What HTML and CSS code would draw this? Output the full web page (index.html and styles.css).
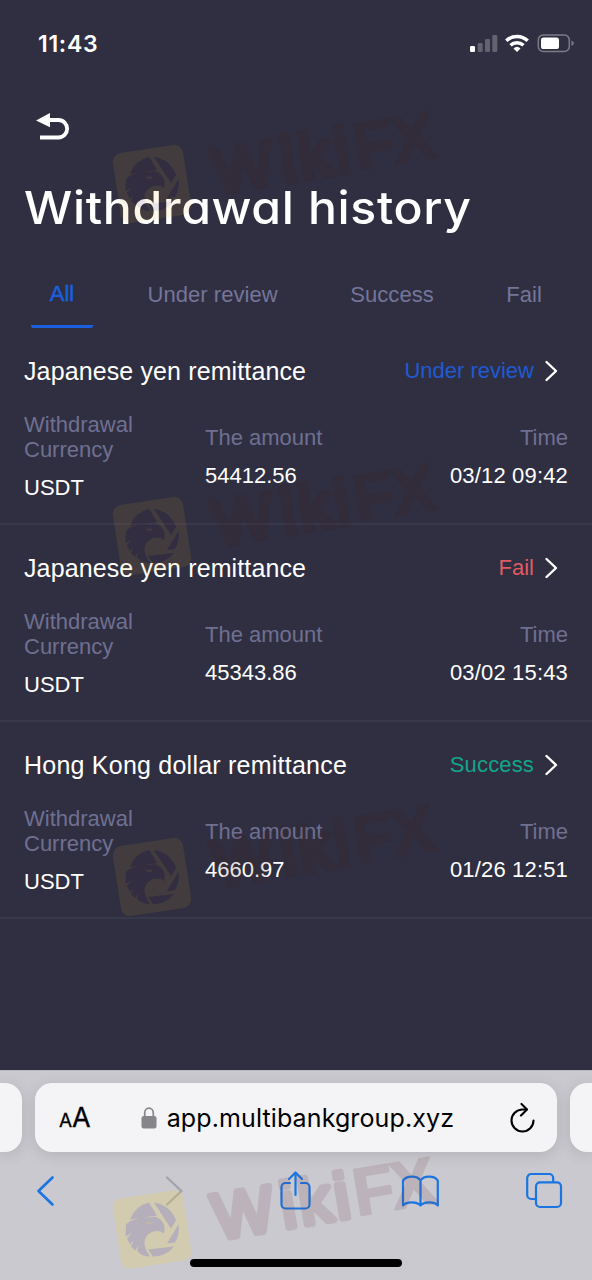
FILE: index.html
```html
<!DOCTYPE html>
<html lang="en">
<head>
<meta charset="utf-8">
<title>Withdrawal history</title>
<link rel="stylesheet" href="styles.css">
</head>
<body>
<div class="screen">
  <header class="status">
    <span class="clock">11:43</span>
    <svg class="status-icons" width="106" height="20" viewBox="0 0 106 20">
      <g fill="#626271"><rect x="7.700" y="9" width="5" height="9" rx="1.300"/><rect x="15" y="5" width="5" height="13" rx="1.300"/><rect x="22.300" y="1" width="5" height="17" rx="1.300"/></g>
      <rect x="0" y="12" width="5" height="6" rx="1.300" fill="#fff"/>
      <g fill="none" stroke="#fff" stroke-width="3.500"><path d="M36.300 6.700a15.500 15.500 0 0 1 21.400 0"/><path d="M40.500 11.200a9.600 9.600 0 0 1 13 0"/></g>
      <path d="M47 18l-3.500-3.600a5.200 5.200 0 0 1 7 0z" fill="#fff"/>
      <rect x="68.300" y="1" width="31" height="16.500" rx="5" fill="none" stroke="#7b7b88" stroke-width="1.500"/>
      <rect x="71" y="3.500" width="18" height="11.500" rx="2.600" fill="#fff"/>
      <path d="M101.500 6.500q2.300 1 2.300 2.800t-2.300 2.800z" fill="#7b7b88"/>
    </svg>
  </header>
  <main class="page">
    <svg class="back" width="34" height="30" viewBox="0 0 34 30"><path d="M0 8.500L14 1v14.300z" fill="#fff"/><path d="M12 8h10.500a8.600 8.700 0 0 1 0 17.500H4" fill="none" stroke="#fff" stroke-width="3.800"/></svg>
    <h1 class="title">Withdrawal history</h1>
    <nav class="tabs">
      <span class="tab tab-active">All</span><span class="tab">Under review</span><span class="tab">Success</span><span class="tab">Fail</span>
    </nav>
    <section class="item">
      <div class="item-head"><span class="name">Japanese yen remittance</span><span class="state review">Under review</span><svg class="chev" width="14" height="22" viewBox="0 0 14 22"><path d="M2.500 2l9.500 9L2.500 20"/></svg></div>
      <div class="fields">
        <div><p class="label">Withdrawal Currency</p><p class="value">USDT</p></div>
        <div><p class="label">The amount</p><p class="value">54412.56</p></div>
        <div class="time"><p class="label">Time</p><p class="value">03/12 09:42</p></div>
      </div>
    </section>
    <section class="item">
      <div class="item-head"><span class="name">Japanese yen remittance</span><span class="state fail">Fail</span><svg class="chev" width="14" height="22" viewBox="0 0 14 22"><path d="M2.500 2l9.500 9L2.500 20"/></svg></div>
      <div class="fields">
        <div><p class="label">Withdrawal Currency</p><p class="value">USDT</p></div>
        <div><p class="label">The amount</p><p class="value">45343.86</p></div>
        <div class="time"><p class="label">Time</p><p class="value">03/02 15:43</p></div>
      </div>
    </section>
    <section class="item">
      <div class="item-head"><span class="name hk">Hong Kong dollar remittance</span><span class="state success">Success</span><svg class="chev" width="14" height="22" viewBox="0 0 14 22"><path d="M2.500 2l9.500 9L2.500 20"/></svg></div>
      <div class="fields">
        <div><p class="label">Withdrawal Currency</p><p class="value">USDT</p></div>
        <div><p class="label">The amount</p><p class="value">4660.97</p></div>
        <div class="time"><p class="label">Time</p><p class="value">01/26 12:51</p></div>
      </div>
    </section>
  </main>
  <footer class="browser">
    <div class="address-row">
      <div class="side side-left"></div>
      <div class="address">
        <span class="aa"><small>A</small>A</span>
        <span class="url"><svg width="16" height="22" viewBox="0 0 16 22"><rect x="0.500" y="9" width="15" height="12.500" rx="2.200" fill="#85858a"/><path d="M3.700 10V6a4.300 4.800 0 0 1 8.600 0v4" fill="none" stroke="#85858a" stroke-width="1.700"/></svg><span class="host">app.multibankgroup.xyz</span></span>
        <svg class="reload" width="26" height="30" viewBox="0 0 26 30" fill="none" stroke="#000" stroke-width="2.100" stroke-linecap="round" stroke-linejoin="round"><path d="M17.500 6.500H13.500A11 11 0 1 0 24.500 17.500"/><path d="M12.500 1l5.500 5.500-6 6"/></svg>
      </div>
      <div class="side side-right"></div>
    </div>
    <div class="tools">
      <svg width="36" height="40" viewBox="0 0 36 40"><path d="M24.500 6.500L10.500 20l14 13.500" stroke-width="2.600"/></svg>
      <svg width="36" height="40" viewBox="0 0 36 40"><path class="off" d="M14 6.500L28.500 20 14 33.500" stroke-width="2.300"/></svg>
      <svg width="36" height="40" viewBox="0 0 36 40"><path d="M13 12H8.500a4 4 0 0 0-4 4v17.500a4 4 0 0 0 4 4h20a4 4 0 0 0 4-4V16a4 4 0 0 0-4-4H24M18.500 24V2M12 8l6.500-6.500L25 8"/></svg>
      <svg width="36" height="40" viewBox="0 0 36 40"><path d="M18.500 9.500C15 4.200 4.500 4.500 1 9.500v25c4-4.200 13.500-4 17.500 0 4-4 13.500-4.200 17.300 0v-25C32.500 4.500 22 4.200 18.500 9.500v25"/></svg>
      <svg width="36" height="40" viewBox="0 0 36 40"><path d="M9 28H5.200A4 4 0 0 1 1.200 24V7a4 4 0 0 1 4-4h18a4 4 0 0 1 4 4v3.500"/><rect x="10" y="11.300" width="25" height="24.700" rx="4"/></svg>
    </div>
    <div class="home"></div>
  </footer>
  <svg class="watermark" width="592" height="1280" viewBox="0 0 592 1280">
    <defs>
      <g id="bird">
        <path d="M-22-10A27 27 0 0 1-3-27L5-14Z"/>
        <path d="M2-27A27 27 0 0 1 24-9L19-1Z"/>
        <path d="M26.500-5A27 27 0 0 1 23 13L15 14Z"/>
        <path d="M22 17A27 27 0 0 1 1 27L-4 20Z"/>
        <path d="M-26-5C-21-10-10-13-2-12C3-14 8-11 10-8C13-5 13-1 12 4C9 1 4 1 1 2C-6 5-9 11-7 17C-6 21-4 24-2 27C-8 27-13 24-15 21L-13 15L-17 21L-21 17L-18 10L-22 15L-25 9L-20 3L-26.500 7Z"/>
      </g>
      <mask id="cutout"><rect x="-40" y="-40" width="80" height="80" fill="#fff"/><use href="#bird"/></mask>
      <g id="mark">
        <g mask="url(#cutout)"><rect class="m-tile" x="-35.500" y="-35.500" width="71" height="71" rx="9" transform="rotate(-8.700)"/></g>
        <use class="m-bird" href="#bird"/>
        <path class="m-tile" d="M-7-7Q-1-8 1-7-2-3-7-7"/>
        <text class="m-text" transform="translate(65 10) rotate(-9.500)" x="0 68.500 87 123 142 180" y="0">Wiki<tspan class="m-bold">FX</tspan></text>
      </g>
    </defs>
    <use href="#mark" x="152" y="184"/><use href="#mark" x="152" y="536"/><use href="#mark" x="152" y="877"/>
    <use class="on-light" href="#mark" x="152" y="1229.500"/>
  </svg>
</div>
</body>
</html>
```
FILE: styles.css
```css
* { box-sizing: border-box; }
body { margin: 0; background: #2f2f41; }
.screen { position: relative; width: 592px; height: 1280px; overflow: hidden; display: flex; flex-direction: column; background: #2f2f41; color: #fff; font-family: "Liberation Sans", Arial, sans-serif; font-size: 22px; }
.status { height: 87px; padding: 0 16px 0 38px; display: flex; align-items: center; justify-content: space-between; }
.clock { font: 600 23px Inter, sans-serif; letter-spacing: 0.7px; }
.page { flex: 1; display: flex; flex-direction: column; }
.back { margin: 25px 0 0 36px; }
.title { margin: 36px 0 0 23.500px; font: 500 45px/60px Inter, sans-serif; font-feature-settings: "cv11"; letter-spacing: 0.6px; white-space: nowrap; transform: scaleX(1.07); transform-origin: left; }
.tabs { margin-top: 38px; padding: 0 51px 0 31px; height: 52px; display: flex; justify-content: space-between; color: #75759a; }
.tab { line-height: 38px; letter-spacing: 0.05px; }
.tab:last-child { margin-right: -1px; }
.tab-active { width: 62px; margin-right: -18px; text-align: center; line-height: 36px; color: #1a5fde; border-bottom: 3px solid #1a5fde; border-radius: 2px; -webkit-text-stroke: 0.5px #1a5fde; }
.item { height: 197px; padding: 27px 24px 0; border-bottom: 2px solid #38384b; }
.item-head { display: flex; align-items: center; height: 32px; }
.name { flex: 1; font-size: 25px; letter-spacing: 0.12px; white-space: nowrap; }
.hk { letter-spacing: 0.23px; }
.chev { margin: 0 10px 0 10px; fill: none; stroke: #fff; stroke-width: 2.4; stroke-linecap: round; stroke-linejoin: round; }
.review { color: #1f5ad2; }
.fail { color: #df5c62; }
.success { color: #12a68a; letter-spacing: 0.15px; }
.fields { margin-top: 25px; display: grid; grid-template-columns: 181px 181px 1fr; align-items: center; line-height: 25px; }
.fields p { margin: 0; }
.label { color: #6f6f91; max-width: 140px; }
.fields .value { margin-top: 13px; }
.time { text-align: right; }
.time .value { letter-spacing: 0.17px; }
.time .label { max-width: none; }
.browser { height: 210px; background: #c9c9cf; border-top: 1px solid #b9b9c1; color: #000; }
.address-row { margin-top: 12px; display: grid; grid-template-columns: 22px 522px 22px; gap: 13px; height: 69px; }
.address, .side { background: #f4f4f6; border-radius: 17px; box-shadow: 0 3px 14px rgba(60, 60, 70, 0.16); }
.side-left { border-radius: 0 17px 17px 0; }
.side-right { border-radius: 17px 0 0 17px; }
.address { display: flex; align-items: center; justify-content: space-between; padding: 0 22px 0 24px; font-family: Inter, sans-serif; }
.aa { font-size: 27px; -webkit-text-stroke: 0.3px #000; }
.aa small { font-size: 19px; }
.url { display: flex; align-items: center; gap: 10px; font-size: 25px; margin-left: -5px; }
.host { letter-spacing: 0.12px; }
.tools { margin-top: 19px; padding: 0 30px 0 28px; display: flex; justify-content: space-between; fill: none; stroke: #1a75e2; stroke-width: 2.2; stroke-linecap: round; stroke-linejoin: round; }
.tools svg { overflow: visible; }
.off { stroke: #a3a3a8; }
.home { width: 212px; height: 8px; margin: 48px 0 0 190px; border-radius: 4px; background: #000; }
.watermark { position: absolute; left: 0; top: 0; pointer-events: none; --tile: rgba(240, 180, 40, 0.1); --bird: rgba(70, 30, 60, 0.12); --ink: #46140f; --ink-opacity: 0.12; }
.m-tile { fill: var(--tile); }
.m-bird { fill: var(--bird); }
.m-text { fill: var(--ink); stroke: var(--ink); stroke-width: 6.5; stroke-linejoin: round; stroke-linecap: round; opacity: var(--ink-opacity); font: 400 64px "Liberation Sans", Arial, sans-serif; }
.m-bold { font-weight: 700; font-size: 67px; stroke-width: 2; }
.on-light { --tile: rgba(240, 210, 90, 0.26); --bird: rgba(110, 80, 120, 0.22); --ink: #783c46; --ink-opacity: 0.15; }
```
